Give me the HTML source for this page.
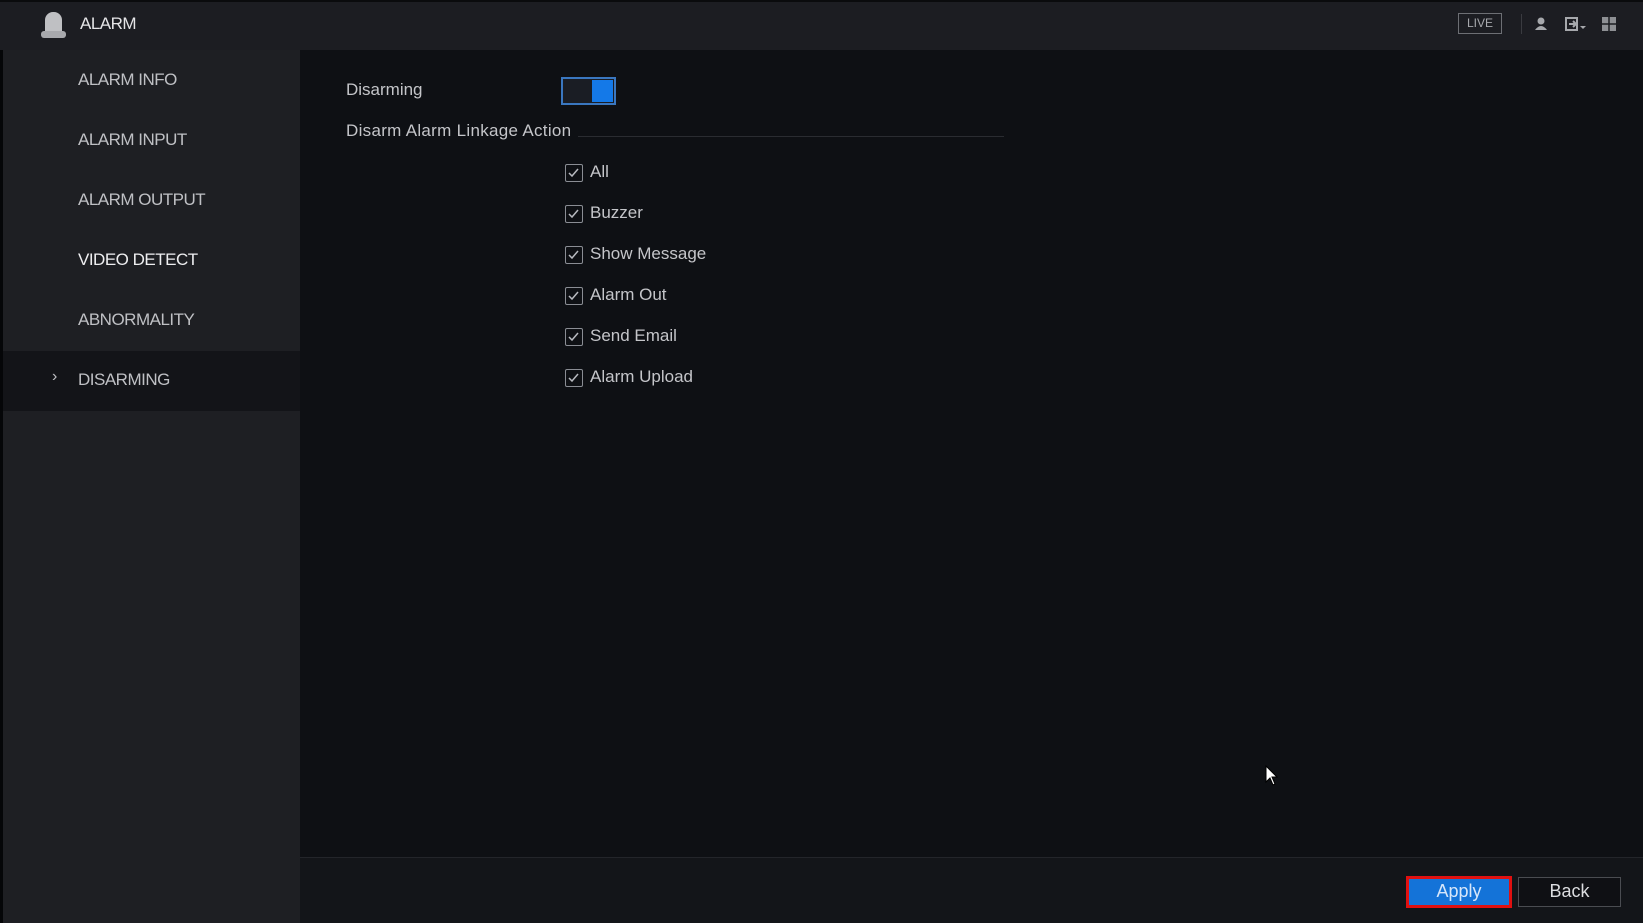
<!DOCTYPE html>
<html><head><style>
*{margin:0;padding:0;box-sizing:border-box}
body{width:1643px;height:923px;background:#0e1014;overflow:hidden;position:relative;font-family:"Liberation Sans",sans-serif;}
.a{position:absolute}
.top{left:0;top:0;width:1643px;height:50px;background:#1c1d22;border-top:2px solid #0a0b0d}
.side{left:3px;top:50px;width:297px;height:873px;background:#1e1f23}
.mi{left:78px;color:#bfc0c4;font-size:17px;letter-spacing:-0.5px}
.cb{left:565px;width:18px;height:18px;border:1.5px solid #8a8d94;border-radius:2px}
.cb svg{position:absolute;left:1px;top:1px}
.ct{left:590px;color:#c4c5c9;font-size:17px}
</style></head><body>
<div class="a" style="left:0;top:0;width:3px;height:923px;background:#050608"></div>
<div class="a top"></div>
<div class="a" style="left:41px;top:12px;width:25px;height:26px">
<div class="a" style="left:4px;top:0;width:17px;height:20px;background:#bfc0c3;border-radius:8px 8px 1px 1px"></div>
<div class="a" style="left:0;top:19px;width:25px;height:7px;background:#a8a9ad;border-radius:3px"></div></div>
<div class="a" style="left:80px;top:14px;color:#e4e4e6;font-size:17px;letter-spacing:-0.5px">ALARM</div>
<div class="a" style="left:1458px;top:13px;width:44px;height:21px;border:1.5px solid #6d6f74;color:#a7a9ad;font-size:12px;text-align:center;line-height:18px">LIVE</div>
<div class="a" style="left:1521px;top:14px;width:1px;height:20px;background:#3a3b40"></div>
<svg class="a" style="left:1533px;top:16px" width="16" height="16"><circle cx="8" cy="5" r="3.5" fill="#a6a8ac"/><path d="M2 14 Q8 6 14 14Z" fill="#a6a8ac"/></svg>
<svg class="a" style="left:1565px;top:17px" width="22" height="14"><rect x="1" y="1" width="11" height="12" fill="none" stroke="#a6a8ac" stroke-width="2"/><path d="M4 7h7M8 4l3 3-3 3" stroke="#a6a8ac" stroke-width="2" fill="none"/><path d="M15 9l3 3 3-3z" fill="#a6a8ac"/></svg>
<svg class="a" style="left:1602px;top:17px" width="14" height="14"><rect x="0" y="0" width="14" height="14" fill="#8e9094"/><path d="M7 0v14M0 7h14" stroke="#1c1d22" stroke-width="1.5"/></svg>
<div class="a side"></div>
<div class="a" style="left:3px;top:351px;width:297px;height:60px;background:#131418"></div>
<div class="a mi" style="top:70px">ALARM INFO</div>
<div class="a mi" style="top:130px">ALARM INPUT</div>
<div class="a mi" style="top:190px">ALARM OUTPUT</div>
<div class="a mi" style="top:250px;color:#eeeef0">VIDEO DETECT</div>
<div class="a mi" style="top:310px">ABNORMALITY</div>
<div class="a mi" style="top:370px">DISARMING</div>
<div class="a" style="left:52px;top:368px;color:#bfc0c4;font-size:16px">›</div>
<div class="a" style="left:346px;top:80px;color:#c4c5c9;font-size:17px">Disarming</div>
<div class="a" style="left:561px;top:77px;width:55px;height:28px;border:2px solid #3a77c0;background:#1a1d24"></div>
<div class="a" style="left:592px;top:80px;width:21px;height:22px;background:#1479e8"></div>
<div class="a" style="left:346px;top:121px;color:#c4c5c9;font-size:17px;letter-spacing:0.3px">Disarm Alarm Linkage Action</div>
<div class="a" style="left:578px;top:136px;width:426px;height:1px;background:#2a2c31"></div>
<div class="a cb" style="top:164px"><svg width="13" height="13"><path d="M2 7l3 3 6-7" stroke="#b8bac0" stroke-width="1.5" fill="none"/></svg></div><div class="a ct" style="top:162px">All</div>
<div class="a cb" style="top:205px"><svg width="13" height="13"><path d="M2 7l3 3 6-7" stroke="#b8bac0" stroke-width="1.5" fill="none"/></svg></div><div class="a ct" style="top:203px">Buzzer</div>
<div class="a cb" style="top:246px"><svg width="13" height="13"><path d="M2 7l3 3 6-7" stroke="#b8bac0" stroke-width="1.5" fill="none"/></svg></div><div class="a ct" style="top:244px">Show Message</div>
<div class="a cb" style="top:287px"><svg width="13" height="13"><path d="M2 7l3 3 6-7" stroke="#b8bac0" stroke-width="1.5" fill="none"/></svg></div><div class="a ct" style="top:285px">Alarm Out</div>
<div class="a cb" style="top:328px"><svg width="13" height="13"><path d="M2 7l3 3 6-7" stroke="#b8bac0" stroke-width="1.5" fill="none"/></svg></div><div class="a ct" style="top:326px">Send Email</div>
<div class="a cb" style="top:369px"><svg width="13" height="13"><path d="M2 7l3 3 6-7" stroke="#b8bac0" stroke-width="1.5" fill="none"/></svg></div><div class="a ct" style="top:367px">Alarm Upload</div>
<div class="a" style="left:300px;top:857px;width:1343px;height:66px;background:#131519;border-top:1px solid #23252a"></div>
<div class="a" style="left:1406px;top:876px;width:106px;height:32px;border:3px solid #e01010;background:#1473d8;color:#d6e6fa;font-size:18px;text-align:center;line-height:25px">Apply</div>
<div class="a" style="left:1518px;top:877px;width:103px;height:30px;border:1.5px solid #4a4c51;background:#0f1014;color:#dcdde0;font-size:18px;text-align:center;line-height:27px">Back</div>
<svg class="a" style="left:1265px;top:765px" width="14" height="22"><path d="M1 1v16l4-4 3 7 2-1-3-7h5z" fill="#fff" stroke="#000" stroke-width="1"/></svg>
</body></html>
